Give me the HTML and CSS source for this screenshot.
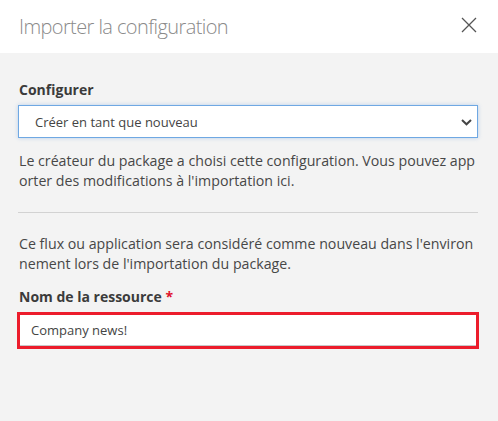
FILE: index.html
```html
<!DOCTYPE html>
<html lang="fr">
<head>
<meta charset="utf-8">
<title>Importer la configuration</title>
<link rel="stylesheet" href="styles.css">
</head>
<body>
<div class="dialog">
  <header class="dialog-header">
    <h1 class="dialog-title">Importer la configuration</h1>
    <button class="close-btn" aria-label="Fermer">
      <svg width="16" height="16" viewBox="0 0 16 16"><path d="M1 1 L15 15 M15 1 L1 15" stroke="#555" stroke-width="1.3" fill="none"/></svg>
    </button>
  </header>
  <main class="dialog-body">
    <label class="field-label label-config">Configurer</label>
    <div class="select">
      <span>Créer en tant que nouveau</span>
      <svg class="chevron" width="11" height="7" viewBox="0 0 11 7"><path d="M1 1 L5.5 5.3 L10 1" stroke="#444" stroke-width="2" fill="none"/></svg>
    </div>
    <p class="help help-first">Le créateur du package a choisi cette configuration. Vous pouvez app<br>orter des modifications à l'importation ici.</p>
    <hr class="divider">
    <p class="help help-second">Ce flux ou application sera considéré comme nouveau dans l'environ<br>nement lors de l'importation du package.</p>
    <label class="field-label label-name">Nom de la ressource <span class="req">*</span></label>
    <div class="input-wrap">
      <div class="input">Company news!</div>
    </div>
  </main>
</div>
</body>
</html>
```

FILE: styles.css
```css
html, body {
  margin: 0;
  padding: 0;
}
body {
  background: #f3f3f3;
  font-family: "Open Sans", "Noto Sans", sans-serif;
  color: #444;
  width: 498px;
  height: 421px;
  overflow: hidden;
}
.dialog-header {
  height: 53px;
  background: #fff;
  display: flex;
  align-items: center;
  justify-content: space-between;
  padding: 0 21px 0 19px;
  box-sizing: border-box;
}
.dialog-title {
  margin: 0;
  font-size: 20px;
  font-weight: 300;
  letter-spacing: -0.6px;
  color: #8a8a8a;
  line-height: 26px;
}
.close-btn {
  background: none;
  border: 0;
  padding: 0;
  width: 16px;
  height: 16px;
  display: flex;
  margin-top: -4px;
}
.dialog-body {
  padding: 27px 20px 0 18px;
  display: flex;
  flex-direction: column;
}
.field-label {
  font-size: 14px;
  font-weight: 700;
  line-height: 20px;
  color: #3b3b3b;
  padding-left: 1px;
}
.req {
  color: #e0112b;
}
.select {
  margin-top: 5px;
  height: 33px;
  box-sizing: border-box;
  border: 1px solid #6fa8e3;
  box-shadow: 0 0 4px rgba(110, 165, 225, 0.45);
  background: #fff;
  display: flex;
  align-items: center;
  justify-content: space-between;
  padding: 1px 5px 0 16px;
  font-size: 13px;
  color: #444;
}
.help {
  margin: 13px 0 0;
  font-size: 14.2px;
  line-height: 20px;
  color: #474747;
  padding-left: 1px;
  white-space: nowrap;
}
.divider {
  border: 0;
  border-top: 1px solid #d2d2d2;
  margin: 21px 0 0;
  height: 0;
}
.help-second {
  margin-top: 21px;
}
.label-name {
  margin-top: 13px;
}
.input-wrap {
  margin: 5px -1px 0;
  border: 3px solid #ec1c2b;
  background: #fff;
}
.input {
  height: 30px;
  border-bottom: 1px solid #c8c8c8;
  padding-left: 11px;
  font-size: 13px;
  line-height: 30px;
  color: #444;
}
```
